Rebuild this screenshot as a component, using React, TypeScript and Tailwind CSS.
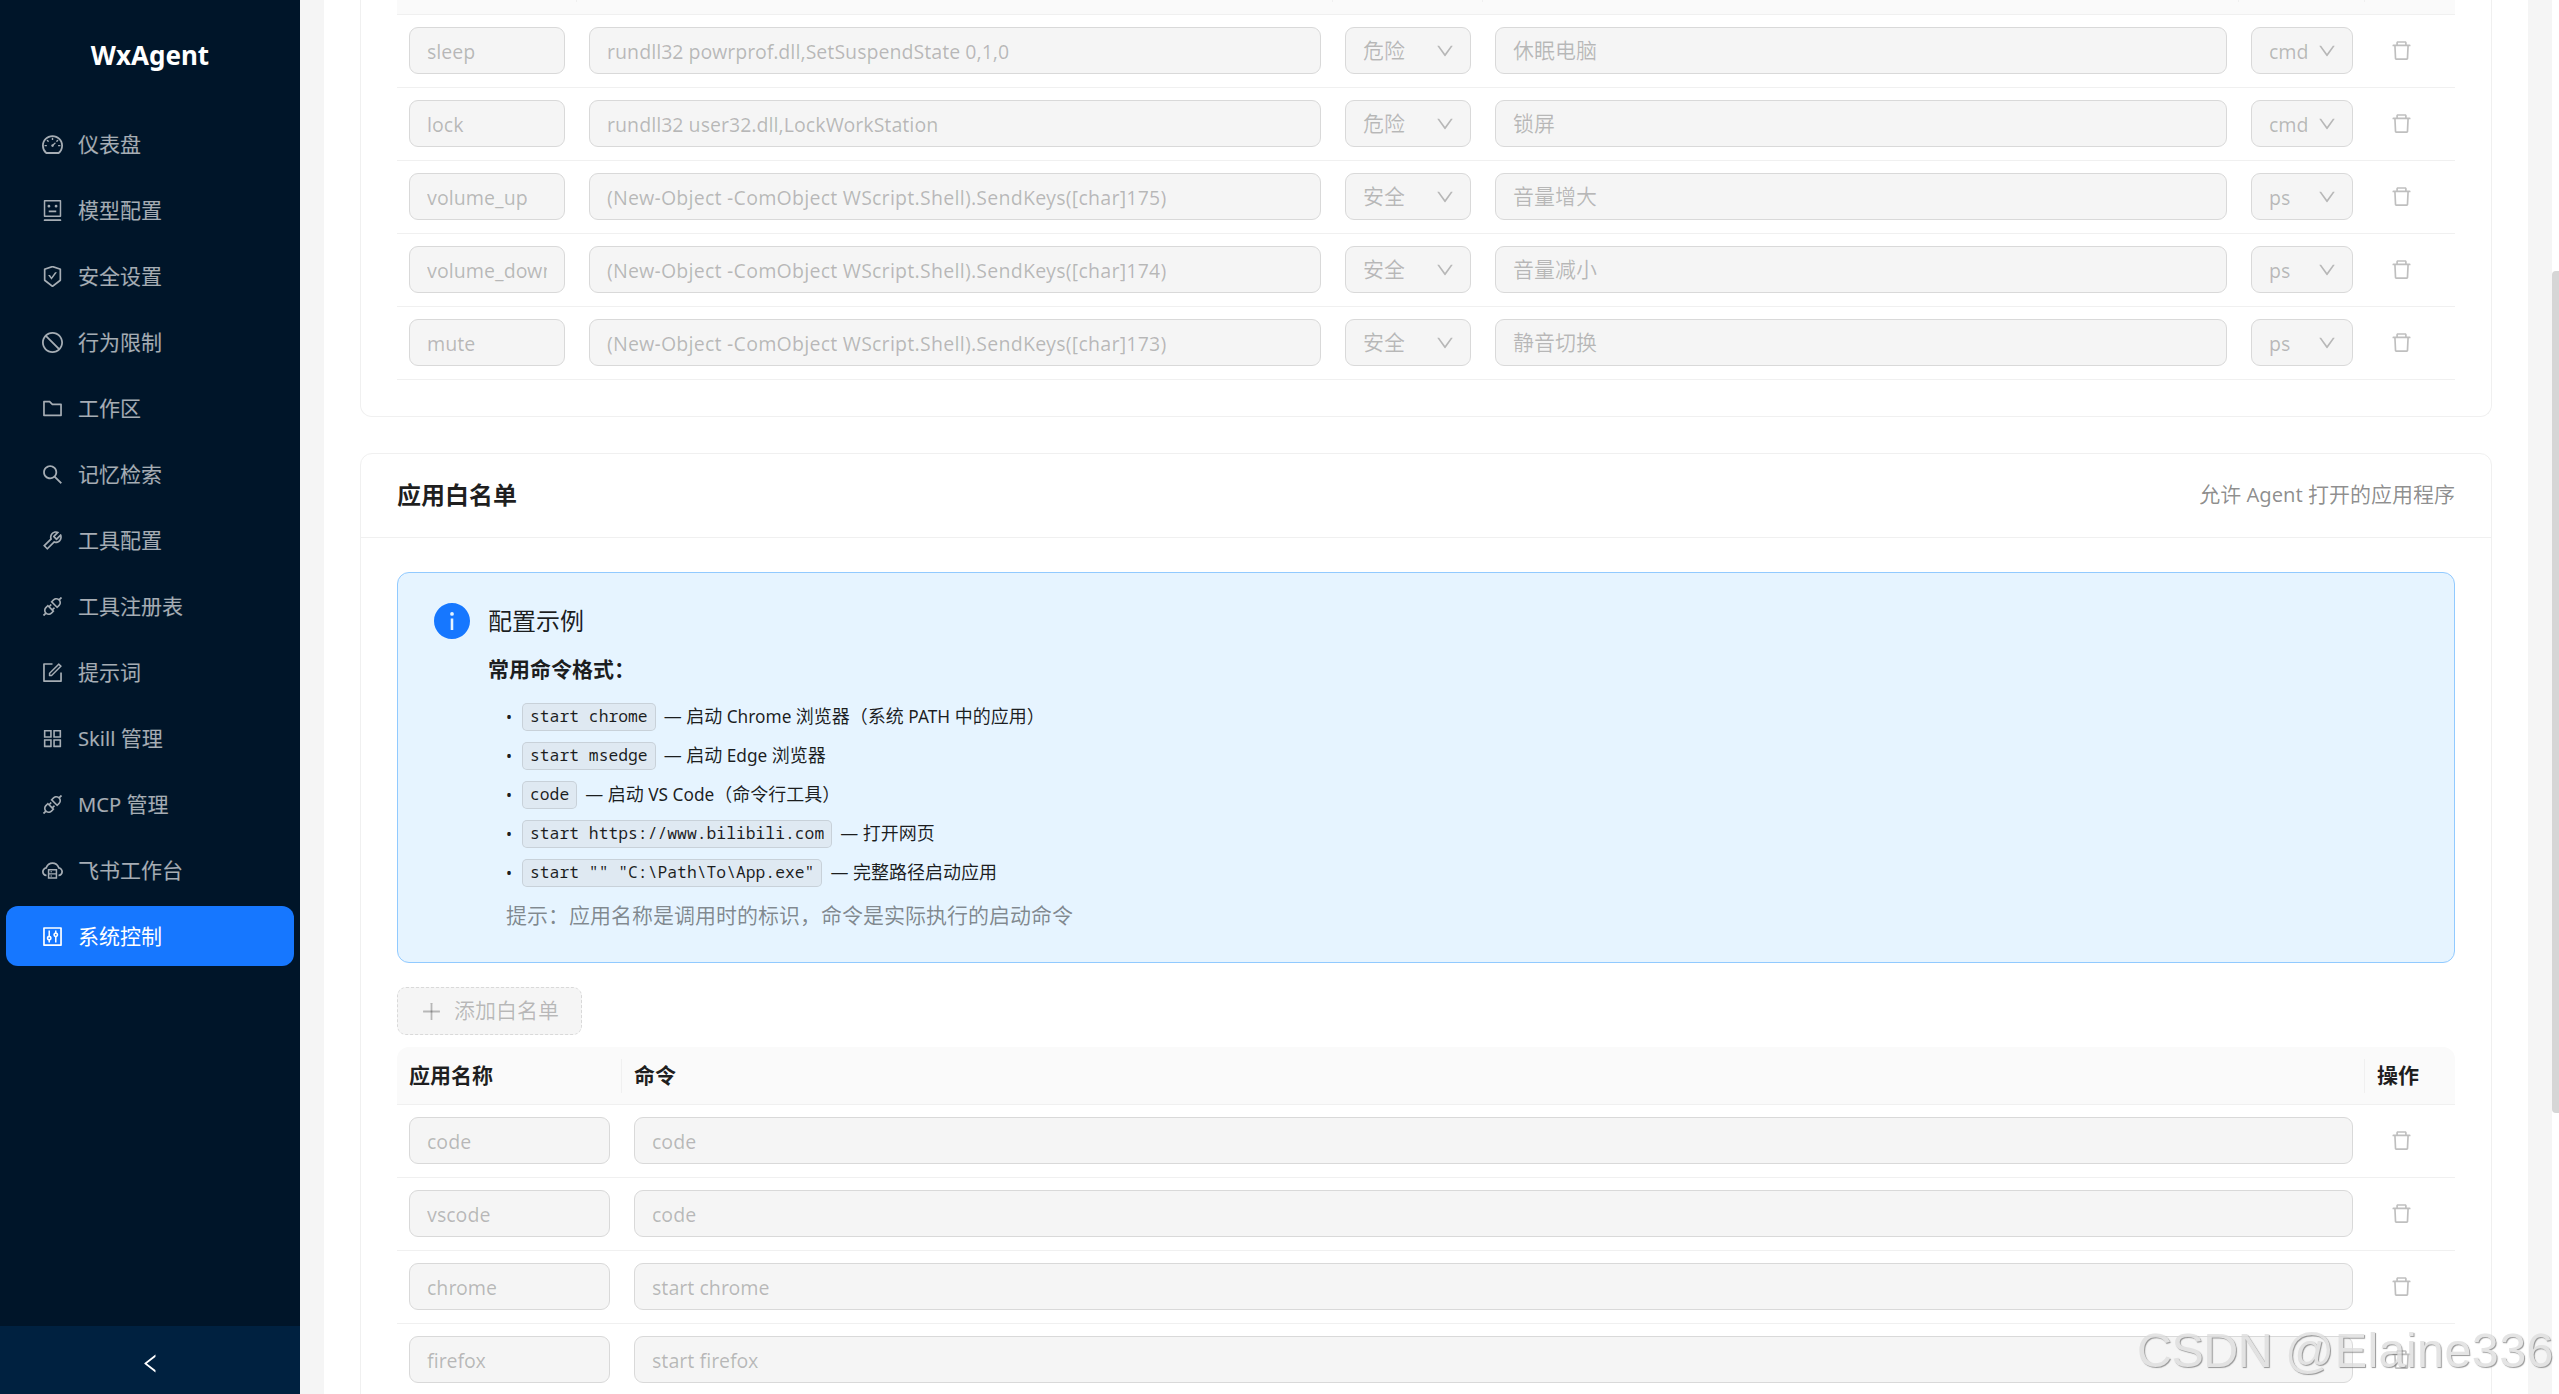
import type { ReactNode } from "react";
import type { IconType } from "react-icons";
import {
  AiFillInfoCircle,
  AiOutlineApi,
  AiOutlineAppstore,
  AiOutlineCloudServer,
  AiOutlineControl,
  AiOutlineDashboard,
  AiOutlineDelete,
  AiOutlineDown,
  AiOutlineFolder,
  AiOutlineForm,
  AiOutlineLeft,
  AiOutlinePlus,
  AiOutlineRobot,
  AiOutlineSafetyCertificate,
  AiOutlineSearch,
  AiOutlineStop,
  AiOutlineTool,
} from "react-icons/ai";

type MenuItem = { label: string; icon: IconType };

type CommandRow = {
  name: string;
  command: string;
  level: string;
  description: string;
  shell: string;
};

type WhitelistRow = { name: string; command: string };

// Trims the empty margin that the icon set leaves round each glyph
const TRIM = "64 64 896 896";

const menu: MenuItem[] = [
  { label: "仪表盘", icon: AiOutlineDashboard },
  { label: "模型配置", icon: AiOutlineRobot },
  { label: "安全设置", icon: AiOutlineSafetyCertificate },
  { label: "行为限制", icon: AiOutlineStop },
  { label: "工作区", icon: AiOutlineFolder },
  { label: "记忆检索", icon: AiOutlineSearch },
  { label: "工具配置", icon: AiOutlineTool },
  { label: "工具注册表", icon: AiOutlineApi },
  { label: "提示词", icon: AiOutlineForm },
  { label: "Skill 管理", icon: AiOutlineAppstore },
  { label: "MCP 管理", icon: AiOutlineApi },
  { label: "飞书工作台", icon: AiOutlineCloudServer },
  { label: "系统控制", icon: AiOutlineControl },
];

const commands: CommandRow[] = [
  { name: "sleep", command: "rundll32 powrprof.dll,SetSuspendState 0,1,0", level: "危险", description: "休眠电脑", shell: "cmd" },
  { name: "lock", command: "rundll32 user32.dll,LockWorkStation", level: "危险", description: "锁屏", shell: "cmd" },
  { name: "volume_up", command: "(New-Object -ComObject WScript.Shell).SendKeys([char]175)", level: "安全", description: "音量增大", shell: "ps" },
  { name: "volume_down", command: "(New-Object -ComObject WScript.Shell).SendKeys([char]174)", level: "安全", description: "音量减小", shell: "ps" },
  { name: "mute", command: "(New-Object -ComObject WScript.Shell).SendKeys([char]173)", level: "安全", description: "静音切换", shell: "ps" },
];

const whitelist: WhitelistRow[] = [
  { name: "code", command: "code" },
  { name: "vscode", command: "code" },
  { name: "chrome", command: "start chrome" },
  { name: "firefox", command: "start firefox" },
];

const examples = [
  { code: "start chrome", text: "— 启动 Chrome 浏览器（系统 PATH 中的应用）" },
  { code: "start msedge", text: "— 启动 Edge 浏览器" },
  { code: "code", text: "— 启动 VS Code（命令行工具）" },
  { code: "start https://www.bilibili.com", text: "— 打开网页" },
  { code: 'start "" "C:\\Path\\To\\App.exe"', text: "— 完整路径启动应用" },
];

// Latin runs are set a little smaller than the Chinese text around them
function Mixed({ children }: { children: string }) {
  return (
    <>
      {children.split(/([\x20-\x7e]+)/).map((part, i) =>
        i % 2 === 1 ? (
          <span key={i} className="text-[0.96em]">
            {part}
          </span>
        ) : (
          part
        ),
      )}
    </>
  );
}

function Sidebar({ active }: { active: string }) {
  return (
    <aside className="flex w-[300px] shrink-0 flex-col bg-[#001529]">
      <div className="flex h-[111px] items-center justify-center text-[26px] font-bold text-white">WxAgent</div>
      <nav className="mt-[3px] flex flex-1 flex-col gap-1.5 px-1.5">
        {menu.map(({ label, icon: Icon }) => (
          <a
            key={label}
            className={`flex h-[60px] shrink-0 items-center rounded-xl pl-9 ${
              label === active ? "bg-[#1677ff] text-white" : "text-white/65"
            }`}
          >
            <Icon viewBox={TRIM} className="size-[21px] shrink-0" />
            <span className="ml-[15px] pt-0.5 whitespace-pre">
              <Mixed>{label}</Mixed>
            </span>
          </a>
        ))}
      </nav>
      <button type="button" className="flex h-[68px] shrink-0 items-center justify-center bg-[#002140] pt-1.5 text-white">
        <AiOutlineLeft viewBox={TRIM} className="size-[21px]" />
      </button>
    </aside>
  );
}

function Field({ value, className = "" }: { value: string; className?: string }) {
  return (
    <input
      disabled
      value={value}
      className={`block h-[47px] w-full min-w-0 rounded-[9px] border border-[#d9d9d9] bg-[#f5f5f5] px-[17px] text-black/25 ${
        /^[\x20-\x7e]+$/.test(value) ? "pt-0.5 text-[19.5px]" : "pb-[3px] text-[21px]"
      } ${className}`}
    />
  );
}

function Select({ value }: { value: string }) {
  return (
    <div className="flex h-[47px] items-center justify-between rounded-[9px] border border-[#d9d9d9] bg-[#f5f5f5] pl-[17px] pr-4 text-black/25">
      <span className={/^[a-z]+$/.test(value) ? "pt-0.5 text-[19.5px]" : ""}>{value}</span>
      <AiOutlineDown viewBox={TRIM} className="size-[18px]" />
    </div>
  );
}

function DeleteButton() {
  return (
    <button type="button" disabled className="ml-3.5 mt-[13px] block text-black/25">
      <AiOutlineDelete viewBox={TRIM} className="size-[21px]" />
    </button>
  );
}

function Row({ cols, children }: { cols: string; children: ReactNode }) {
  return <div className={`grid h-[73px] items-start gap-x-6 border-b border-[#f0f0f0] px-3 pt-3 ${cols}`}>{children}</div>;
}

const commandCols = "grid-cols-[156px_1fr_126px_1fr_102px_66px]";
const whitelistCols = "grid-cols-[201px_1fr_66px]";

function CommandTable() {
  return (
    <div>
      <div className="grid h-[15px] grid-cols-[180px_1fr_150px_1fr_126px_90px] items-start border-b border-[#f0f0f0] bg-[#fafafa]">
        {[0, 1, 2, 3, 4].map((i) => (
          <span key={i} className="h-0.5 border-r border-[#f0f0f0]" />
        ))}
      </div>
      {commands.map((row) => (
        <Row key={row.name} cols={commandCols}>
          <Field value={row.name} />
          <Field value={row.command} className={row.shell === "ps" ? "tracking-[0.21px]" : ""} />
          <Select value={row.level} />
          <Field value={row.description} />
          <Select value={row.shell} />
          <DeleteButton />
        </Row>
      ))}
    </div>
  );
}

function ExampleAlert() {
  return (
    <div className="flex h-[391px] rounded-xl border border-[#91caff] bg-[#e6f4ff] px-9 pt-[30px]">
      <AiFillInfoCircle viewBox={TRIM} className="size-9 shrink-0 text-[#1677ff]" />
      <div className="ml-[18px]">
        <p className="text-2xl leading-9">配置示例</p>
        <p className="mt-3.5 font-bold leading-[33px]">常用命令格式：</p>
        <ul className="mt-[11px] pl-[18px] text-lg">
          {examples.map((item) => (
            <li key={item.code} className="flex h-[39px] items-center">
              <span className="w-4 text-base">•</span>
              <code className="flex h-7 items-center whitespace-pre rounded-[5px] border border-black/10 bg-[#dfe9f2] px-[7px] font-['Noto_Sans_Mono','DejaVu_Sans_Mono',monospace] text-[16.35px]">
                {item.code}
              </code>
              <span className="ml-2 whitespace-pre">
                <Mixed>{item.text}</Mixed>
              </span>
            </li>
          ))}
        </ul>
        <p className="mt-[7px] pl-[18px] leading-[33px] text-black/45">提示：应用名称是调用时的标识，命令是实际执行的启动命令</p>
      </div>
    </div>
  );
}

function WhitelistTable() {
  return (
    <div className="mt-3">
      <div className="grid h-[58px] grid-cols-[225px_1fr_90px] items-center rounded-t-xl border-b border-[#f0f0f0] bg-[#fafafa] font-bold">
        <span className="h-[34px] border-r border-[#f0f0f0] pl-3 leading-8">应用名称</span>
        <span className="h-[34px] border-r border-[#f0f0f0] pl-3 leading-8">命令</span>
        <span className="h-[34px] pl-3 leading-8">操作</span>
      </div>
      {whitelist.map((row) => (
        <Row key={row.name} cols={whitelistCols}>
          <Field value={row.name} />
          <Field value={row.command} />
          <DeleteButton />
        </Row>
      ))}
    </div>
  );
}

export default function App() {
  return (
    <div className="relative flex h-[1394px] w-[2559px] overflow-hidden bg-[#f5f5f5] font-['Noto_Sans','Noto_Sans_CJK_SC',sans-serif] text-[21px] text-black/88">
      <Sidebar active="系统控制" />
      <main className="mx-6 h-full flex-1 overflow-hidden bg-white px-9">
        <section className="h-[417px] rounded-b-xl border border-t-0 border-[#f0f0f0] px-9">
          <CommandTable />
        </section>
        <section className="mt-9 h-[1100px] rounded-t-xl border border-[#f0f0f0]">
          <header className="flex h-[84px] items-center justify-between border-b border-[#f0f0f0] px-9 pb-0.5">
            <h2 className="text-2xl font-bold">应用白名单</h2>
            <span className="whitespace-pre text-black/45">
              <Mixed>允许 Agent 打开的应用程序</Mixed>
            </span>
          </header>
          <div className="px-9 pt-[34px]">
            <ExampleAlert />
            <button
              type="button"
              disabled
              className="mt-6 flex h-12 w-[185px] items-center rounded-[9px] border border-dashed border-[#d9d9d9] bg-[#f5f5f5] pl-[23px] text-black/25"
            >
              <AiOutlinePlus viewBox={TRIM} className="size-[21px]" />
              <span className="ml-3">添加白名单</span>
            </button>
            <WhitelistTable />
          </div>
        </section>
      </main>
      <div className="w-[7px] bg-white pt-[271px]">
        <div className="h-[842px] rounded-l bg-[#d6d6d6]" />
      </div>
      <div className="pointer-events-none absolute right-[5px] bottom-4 whitespace-nowrap font-['Liberation_Sans',sans-serif] text-[48.5px] leading-[56px] tracking-[0.4px] text-[#dcdcdc] opacity-75 [text-shadow:1px_1px_1px_#777]">
        <span className="tracking-[-0.6px]">CSDN </span>@Elaine336
      </div>
    </div>
  );
}
